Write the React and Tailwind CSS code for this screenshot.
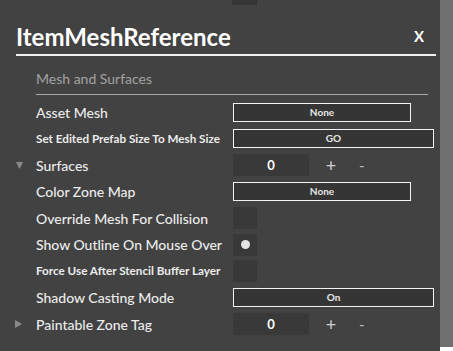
import React from 'react';

const font = { fontFamily: 'Lato, "Open Sans", sans-serif' };

function Button({ label, wide }) {
  return (
    <div
      className={`h-[19px] ${wide ? 'w-[201px]' : 'w-[178px]'} border-[1.5px] border-[#f2f2f2] bg-[#353535] flex items-center justify-center text-[10px] font-bold text-[#e6e6e6]`}
    >
      {label}
    </div>
  );
}

function Counter() {
  return (
    <div className="flex items-center">
      <div className="w-[76px] h-[22px] bg-[#393939] flex items-center justify-center text-[13px] font-bold text-white">0</div>
      <span className="ml-[16px] w-[12px] text-center text-[18px] leading-none text-[#cfcfcf]">+</span>
      <span className="ml-[22px] text-[15px] leading-none text-[#bdbdbd]">-</span>
    </div>
  );
}

function Check({ on }) {
  return (
    <div className="w-[24px] h-[22px] bg-[#393939] flex items-center justify-center">
      {on && <div className="w-[9px] h-[9px] rounded-full bg-[#e4e4e4]" />}
    </div>
  );
}

function Row({ label, small, arrow, children }) {
  return (
    <div className="h-[26.5px] flex items-center relative">
      {arrow === 'down' && (
        <svg className="absolute left-[16px] top-[10px]" width="7" height="7" viewBox="0 0 7 7">
          <path d="M0 0H7L3.5 7Z" fill="#8a8a8a" />
        </svg>
      )}
      {arrow === 'right' && (
        <svg className="absolute left-[15px] top-[9px]" width="7" height="8" viewBox="0 0 7 8">
          <path d="M0 0L7 4L0 8Z" fill="#8a8a8a" />
        </svg>
      )}
      <div className={`w-[233px] pl-[36px] text-[#ececec] ${small ? 'text-[11.7px] font-bold' : 'text-[14px] font-medium'}`}>
        {label}
      </div>
      {children}
    </div>
  );
}

export default function App() {
  return (
    <div className="w-[453px] h-[351px] overflow-hidden flex" style={font}>
      <div className="w-[440px] h-full bg-[#424242] flex flex-col">
        <div className="h-[5px]">
          <div className="ml-[232px] w-[25px] h-[5px] bg-[#353535]" />
        </div>
        <div className="ml-[16px] mr-[4px] mt-[20px] h-[31px] flex items-end justify-between border-b-2 border-[#f0f0f0]">
          <span className="text-[24px] font-bold text-white leading-none pb-[5px]">ItemMeshReference</span>
          <span className="text-[15px] font-bold text-white leading-none pb-[10px] mr-[12px]">X</span>
        </div>
        <div className="ml-[36px] mr-[12px] mt-[16px] h-[23px] border-b border-[#a8a8a8] text-[14px] text-[#a2a2a2] leading-none">
          Mesh and Surfaces
        </div>
        <div className="mt-[4px]">
          <Row label="Asset Mesh"><Button label="None" /></Row>
          <Row label="Set Edited Prefab Size To Mesh Size" small><Button label="GO" wide /></Row>
          <Row label="Surfaces" arrow="down"><Counter /></Row>
          <Row label="Color Zone Map"><Button label="None" /></Row>
          <Row label="Override Mesh For Collision"><Check /></Row>
          <Row label="Show Outline On Mouse Over"><Check on /></Row>
          <Row label="Force Use After Stencil Buffer Layer" small><Check /></Row>
          <Row label="Shadow Casting Mode"><Button label="On" wide /></Row>
          <Row label="Paintable Zone Tag" arrow="right"><Counter /></Row>
        </div>
      </div>
      <div className="flex-1 h-full flex flex-col">
        <div className="flex-1 bg-[#6f6f6f]" />
        <div className="h-[4px] bg-white" />
      </div>
    </div>
  );
}
